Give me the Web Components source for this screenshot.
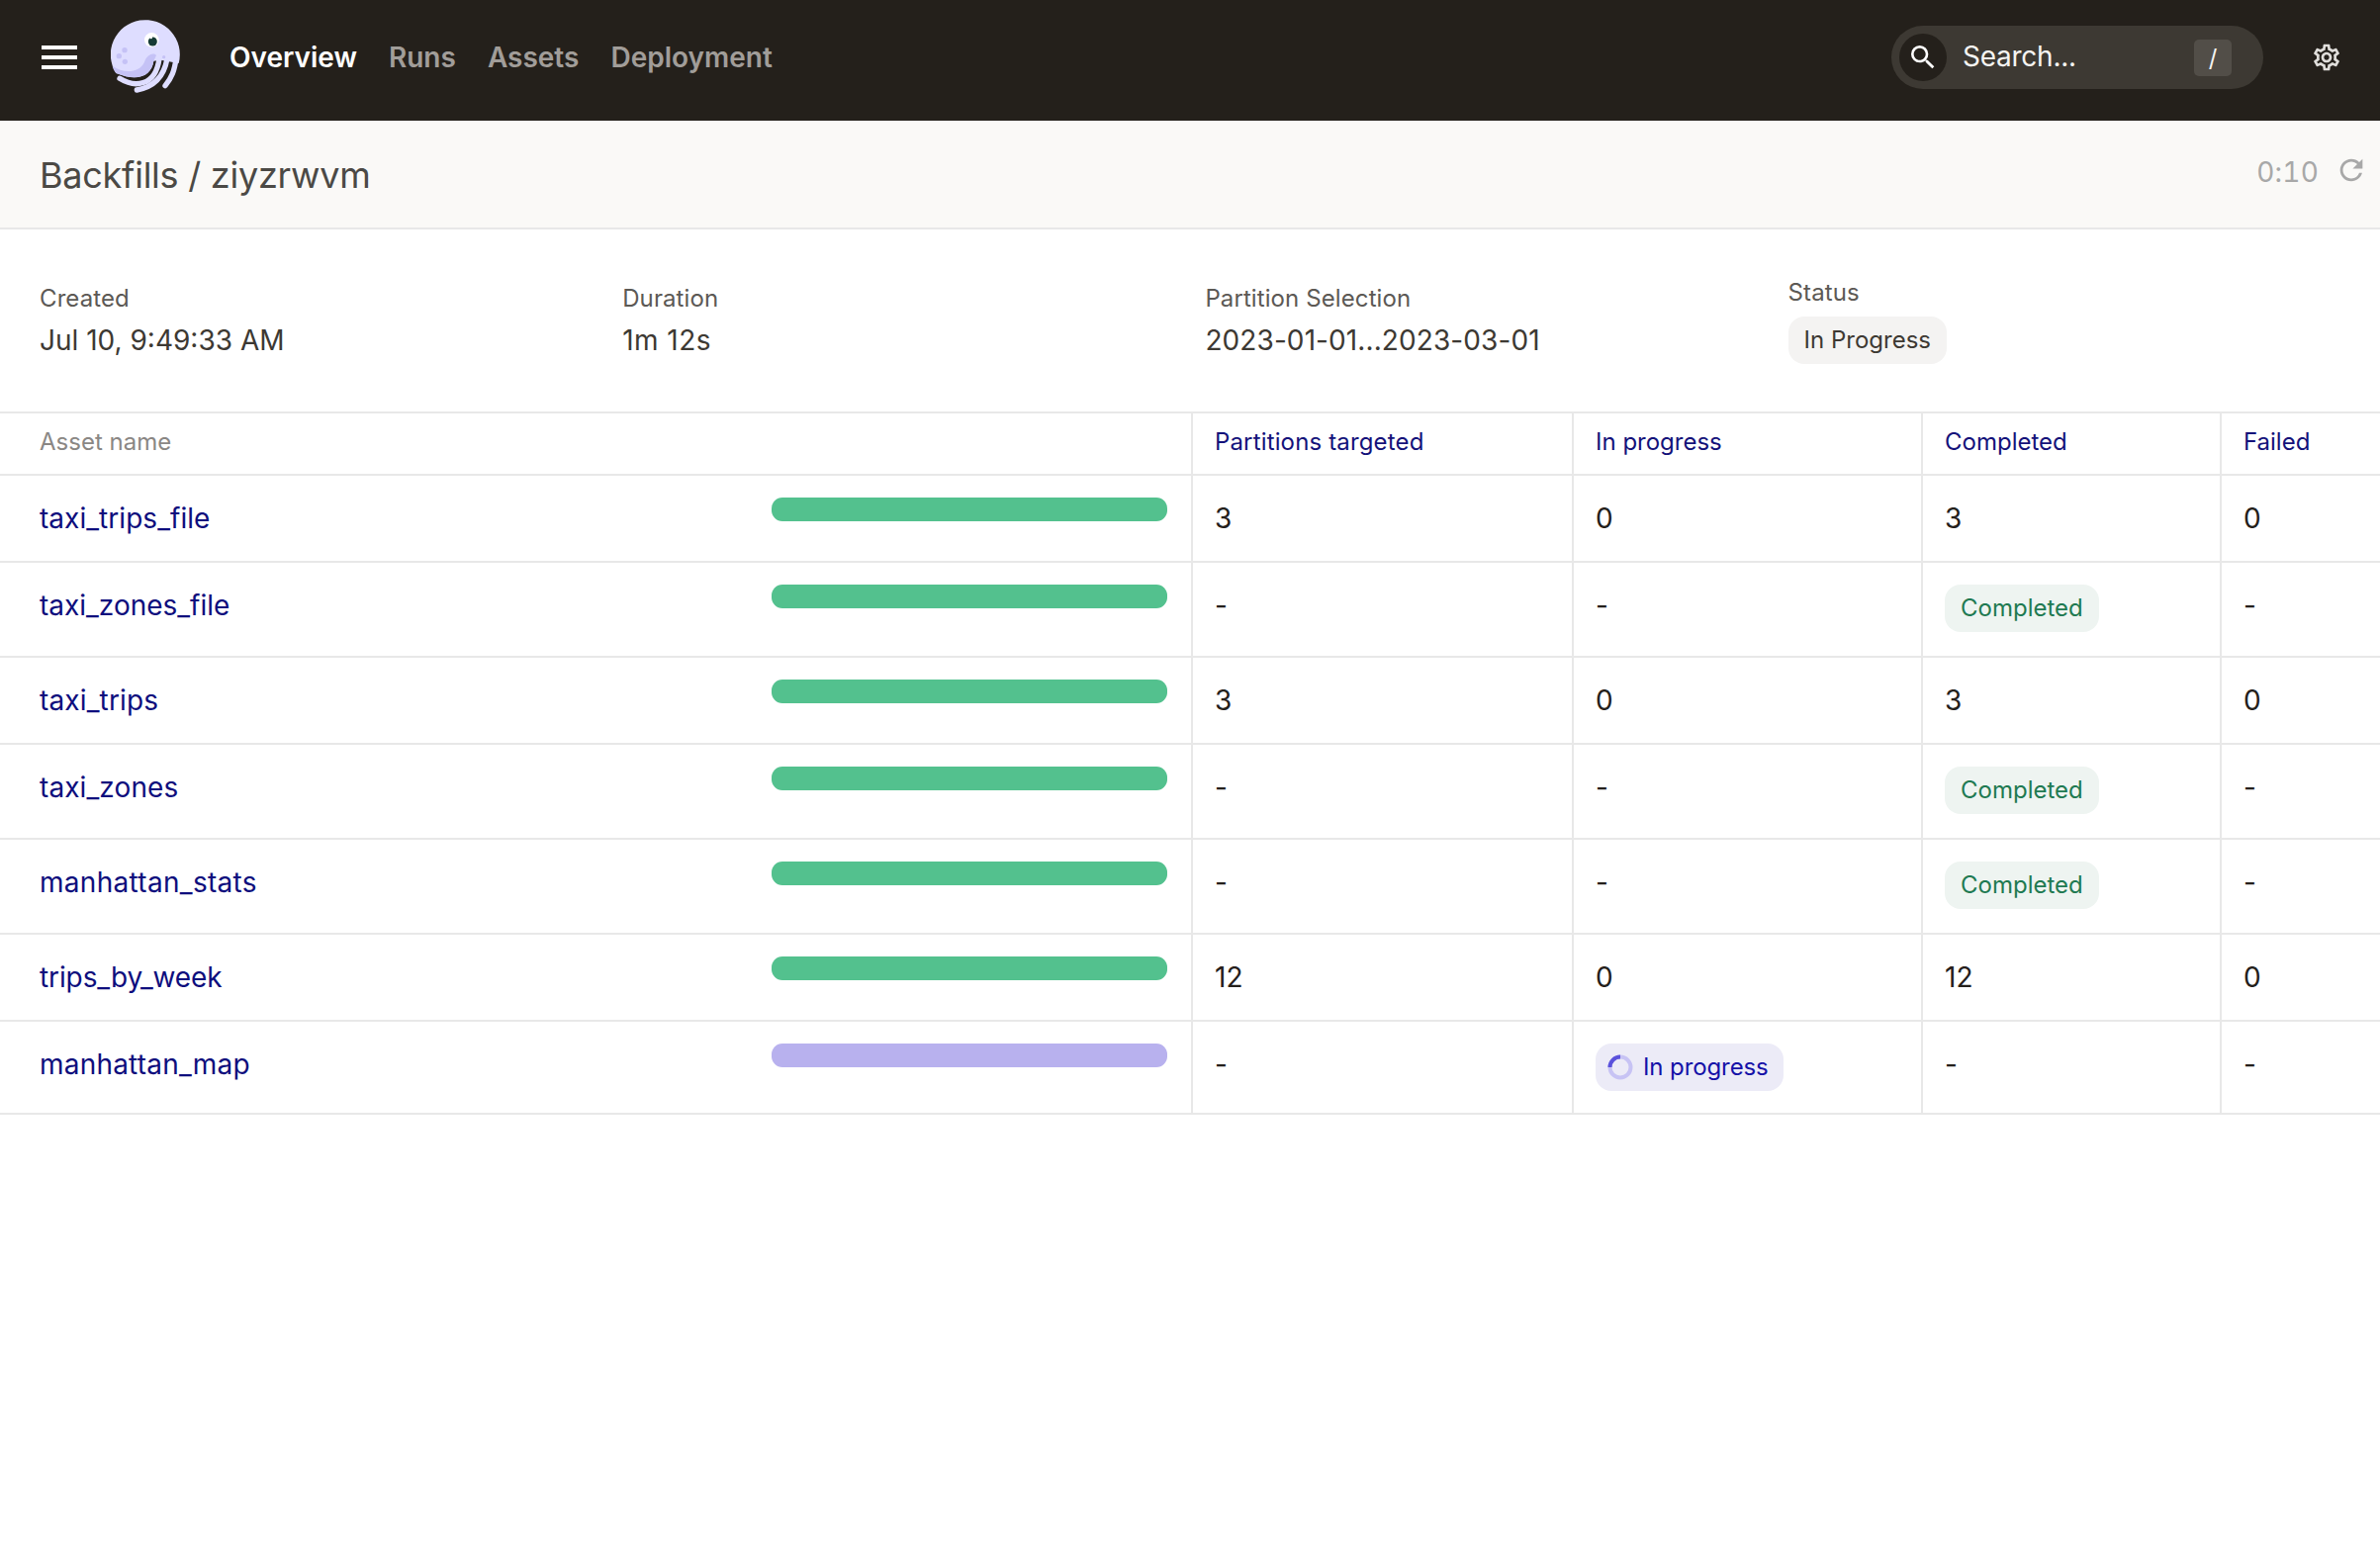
<!DOCTYPE html>
<html lang="en">
<head>
<meta charset="utf-8">
<title>Backfills / ziyzrwvm</title>
<style>
html,body{margin:0;padding:0;background:#fff;font-family:Inter,"Liberation Sans",sans-serif;}
body{width:2406px;min-height:1562px;}
</style>
</head>
<body>
<app-nav></app-nav>
<page-header heading="Backfills / ziyzrwvm" timer="0:10"></page-header>
<details-bar></details-bar>
<backfill-table>
  <backfill-row name="taxi_trips_file" track=".05" bar="done" target="3" running="0" completed="3" failed="0"></backfill-row>
  <backfill-row name="taxi_zones_file" bar="done" target="-" running="-" completed="@done" failed="-"></backfill-row>
  <backfill-row name="taxi_trips" track=".15" bar="done" target="3" running="0" completed="3" failed="0"></backfill-row>
  <backfill-row name="taxi_zones" track=".1" bar="done" target="-" running="-" completed="@done" failed="-"></backfill-row>
  <backfill-row name="manhattan_stats" track=".3" bar="done" target="-" running="-" completed="@done" failed="-"></backfill-row>
  <backfill-row name="trips_by_week" track="-.1" bar="done" target="12" running="0" completed="12" failed="0"></backfill-row>
  <backfill-row name="manhattan_map" track=".2" bar="run" target="-" running="@run" completed="-" failed="-"></backfill-row>
</backfill-table>
<script>
const make=(name,html)=>customElements.define(name,class extends HTMLElement{
  connectedCallback(){ if(this.shadowRoot) return; this.attachShadow({mode:'open'}).innerHTML=typeof html==='function'?html(this):html; }
});
make('dagster-logo',`<style>:host{display:block;width:74px;height:76px;flex:none}svg{display:block;width:100%;height:100%}</style>
<svg viewBox="0 0 222 228" aria-hidden="true">
  <path d="M16 162A105 105 0 1 1 206 132L152 122L130 125C124 168 85 190 16 162Z" fill="#DEDDFF"/>
  <path d="M16 162C10 155 7 148 5 140C40 165 88 160 102 128C110 105 130 98 138 108L130 125C124 168 85 190 16 162Z" fill="#C5C2F6"/>
  <circle cx="42" cy="92" r="8" fill="#C5C2F6"/><circle cx="25" cy="110" r="8" fill="#C5C2F6"/><circle cx="43" cy="127" r="8" fill="#C5C2F6"/>
  <g fill="none" stroke="#DEDDFF" stroke-width="16" stroke-linecap="round">
    <path d="M27 178C70 205 135 205 147 118"/>
    <path d="M79 213C125 205 160 180 171 118"/>
    <path d="M165 200C185 175 193 155 198 118"/>
  </g>
  <circle cx="161" cy="113" r="5" fill="#C5C2F6"/>
  <circle cx="124" cy="61" r="22" fill="#fff"/>
  <circle cx="127" cy="66" r="13.5" fill="#163B36"/>
  <circle cx="122" cy="54" r="4" fill="#fff"/>
</svg>`);
make('nav-link',`<style>:host{display:block;font:600 28px/40px Inter,"Liberation Sans",sans-serif;color:#A19D99;white-space:nowrap}:host([active]){color:#fff}</style><slot></slot>`);
make('search-pill',`<style>
:host{display:flex;align-items:center;width:376px;height:64px;border-radius:32px;background:#3D3933;padding:0 32px 0 8px;box-sizing:border-box;font:400 28px/36px Inter,"Liberation Sans",sans-serif;color:#F5F4F2}
.ic{width:48px;height:48px;border-radius:50%;background:#24201B;display:flex;align-items:center;justify-content:center;flex:none}
svg{width:32px;height:32px;fill:#fff;display:block}
.t{margin-left:16px;flex:1;letter-spacing:-.25px;margin-top:-3px}
.k{width:38px;height:37px;border-radius:5px;background:#524E48;display:flex;align-items:center;justify-content:center;font-size:24px;line-height:37px}
</style><span class="ic"><svg viewBox="0 0 24 24"><path d="M15.5 14h-.79l-.28-.27A6.471 6.471 0 0 0 16 9.5 6.5 6.5 0 1 0 9.5 16c1.61 0 3.09-.59 4.23-1.57l.27.28v.79l5 4.99L20.49 19l-4.99-5zm-6 0C7.01 14 5 11.99 5 9.5S7.01 5 9.5 5 14 7.01 14 9.5 11.99 14 9.5 14z"/></svg></span><span class="t">Search...</span><span class="k">/</span>`);
make('app-nav',`<style>
:host{display:flex;align-items:center;height:122px;background:#24201B;box-sizing:border-box;padding:0 38px 6px 36px}
.m{width:48px;height:48px;fill:#fff;display:block;flex:none;margin-right:28px}
.links{display:flex;gap:32px;margin-left:46px;flex:1}
.g{width:32px;height:32px;fill:#E0DEDB;display:block;margin-left:48px}
</style><svg class="m" viewBox="0 0 24 24"><path d="M3 18h18v-2H3v2zm0-5h18v-2H3v2zm0-7v2h18V6H3z"/></svg>
<dagster-logo></dagster-logo>
<div class="links"><nav-link active>Overview</nav-link><nav-link>Runs</nav-link><nav-link>Assets</nav-link><nav-link>Deployment</nav-link></div>
<search-pill></search-pill>
<svg class="g" viewBox="0 0 24 24"><path d="M19.43 12.98c.04-.32.07-.64.07-.98 0-.34-.03-.66-.07-.98l2.11-1.65c.19-.15.24-.42.12-.64l-2-3.46a.5.5 0 0 0-.61-.22l-2.49 1c-.52-.4-1.08-.73-1.69-.98l-.38-2.65A.488.488 0 0 0 14 2h-4c-.25 0-.46.18-.49.42l-.38 2.65c-.61.25-1.17.59-1.69.98l-2.49-1a.566.566 0 0 0-.18-.03c-.17 0-.34.09-.43.25l-2 3.46c-.13.22-.07.49.12.64l2.11 1.65c-.04.32-.07.65-.07.98 0 .33.03.66.07.98l-2.11 1.65c-.19.15-.24.42-.12.64l2 3.46a.5.5 0 0 0 .61.22l2.49-1c.52.4 1.08.73 1.69.98l.38 2.65c.03.24.24.42.49.42h4c.25 0 .46-.18.49-.42l.38-2.65c.61-.25 1.17-.59 1.69-.98l2.49 1c.06.02.12.03.18.03.17 0 .34-.09.43-.25l2-3.46c.12-.22.07-.49-.12-.64l-2.11-1.65zm-1.98-1.71c.04.31.05.52.05.73 0 .21-.02.43-.05.73l-.14 1.13.89.7 1.08.84-.7 1.21-1.27-.51-1.04-.42-.9.68c-.43.32-.84.56-1.25.73l-1.06.43-.16 1.13-.2 1.35h-1.4l-.19-1.35-.16-1.13-1.06-.43c-.43-.18-.83-.41-1.23-.71l-.91-.7-1.06.43-1.27.51-.7-1.21 1.08-.84.89-.7-.14-1.13c-.03-.31-.05-.54-.05-.74s.02-.43.05-.73l.14-1.13-.89-.7-1.08-.84.7-1.21 1.27.51 1.04.42.9-.68c.43-.32.84-.56 1.25-.73l1.06-.43.16-1.13.2-1.35h1.39l.19 1.35.16 1.13 1.06.43c.43.18.83.41 1.23.71l.91.7 1.06-.43 1.27-.51.7 1.21-1.07.85-.89.7.14 1.13zM12 8c-2.21 0-4 1.79-4 4s1.79 4 4 4 4-1.79 4-4-1.79-4-4-4zm0 6c-1.1 0-2-.9-2-2s.9-2 2-2 2 .9 2 2-.9 2-2 2z"/></svg>`);
make('page-header',el=>`<style>
:host{display:flex;align-items:center;height:110px;box-sizing:border-box;background:#FAF9F7;border-bottom:2px solid #E8E8E8;padding:0 12px 0 40px;font-family:Inter,"Liberation Sans",sans-serif}
h1{margin:2px 0 0;flex:1;font:400 36px/44px Inter,"Liberation Sans",sans-serif;letter-spacing:-.25px;color:#4B4945}
.r{display:flex;align-items:center;gap:16px;margin-top:-8px;color:#A8A8A8;font-size:28px;line-height:36px;font-variant-numeric:tabular-nums;letter-spacing:.2px}
.r span{position:relative;top:2px}
svg{width:34px;height:34px;fill:#A8A8A8;display:block}
</style><h1>${el.getAttribute('heading')}</h1><div class="r"><span>${el.getAttribute('timer')}</span><svg viewBox="0 0 24 24"><path d="M17.65 6.35A7.958 7.958 0 0 0 12 4c-4.42 0-7.99 3.58-7.99 8s3.57 8 7.99 8c3.73 0 6.84-2.55 7.73-6h-2.08A5.99 5.99 0 0 1 12 18c-3.31 0-6-2.69-6-6s2.69-6 6-6c1.66 0 3.14.69 4.22 1.78L13 11h7V4l-2.35 2.35z"/></svg></div>`);
make('detail-item',el=>`<style>
:host{display:flex;flex-direction:column;gap:8px;font-family:Inter,"Liberation Sans",sans-serif}
.l{font-size:24px;line-height:32px;color:#5C5955;letter-spacing:.1px}
.v{font-size:28px;line-height:36px;color:#3D3933;letter-spacing:${el.getAttribute('track')||0}px}
</style><div class="l">${el.getAttribute('label')}</div><div class="v"><slot></slot></div>`);
make('status-tag',el=>{
  const t=el.getAttribute('tone');
  return `<style>
:host{display:inline-flex;align-items:center;height:48px;box-sizing:border-box;padding:0 16px;border-radius:16px;font:400 24px/32px Inter,"Liberation Sans",sans-serif;letter-spacing:0;white-space:nowrap;vertical-align:top}
:host([tone=neutral]){background:#F4F3F2;color:#3D3933}
:host([tone=done]){background:#EEF4F1;color:#1F7A52;margin-bottom:2px}
:host([tone=run]){background:#ECEBF7;color:#1511A8;padding:0 15px 0 12px;letter-spacing:-.1px}
svg{width:26px;height:26px;margin-right:10px;display:block;flex:none}
</style>${t==='run'?`<svg viewBox="0 0 26 26"><circle cx="13" cy="13" r="10.5" fill="none" stroke="#C7C3F4" stroke-width="4"/><path d="M2.5 13A10.5 10.5 0 0 1 13 2.5" fill="none" stroke="#5B52DC" stroke-width="4"/></svg>`:''}<slot></slot>`;
});
make('details-bar',`<style>
:host{display:grid;grid-template-columns:repeat(4,589.2px);align-items:center;padding:48px 0 48px 40px;height:184px;box-sizing:border-box}
</style>
<detail-item label="Created">Jul 10, 9:49:33 AM</detail-item>
<detail-item label="Duration" track=".45">1m 12s</detail-item>
<detail-item label="Partition Selection" track=".1">2023-01-01...2023-03-01</detail-item>
<detail-item label="Status"><status-tag tone="neutral">In Progress</status-tag></detail-item>`);
const COLS='1204px 385px 353px 302px 162px';
make('backfill-table',`<style>
:host{display:block;font-family:Inter,"Liberation Sans",sans-serif;border-bottom:2px solid #E8E8E8}
.h{display:grid;grid-template-columns:${COLS};border-top:2px solid #E8E8E8;height:63px;box-sizing:border-box;font-size:24px;line-height:32px;color:#14127A}
.h>div{padding:13px 0 0 22px;border-left:2px solid #E8E8E8;box-sizing:border-box}
.h>div:first-child{border:0;padding-left:40px;color:#8A8784}
.p{letter-spacing:.15px}
</style><div class="h"><div>Asset name</div><div class="p">Partitions targeted</div><div>In progress</div><div>Completed</div><div>Failed</div></div><slot></slot>`);
const cell=v=>v==='@done'?'<status-tag tone="done">Completed</status-tag>':v==='@run'?'<status-tag tone="run">In progress</status-tag>':v;
make('backfill-row',el=>{
  const a=n=>el.getAttribute(n);
  return `<style>
:host{display:grid;grid-template-columns:${COLS};border-top:2px solid #E8E8E8;font-family:Inter,"Liberation Sans",sans-serif;font-size:28px;line-height:42px;color:#24201B}
.c{padding:22px 0 22px 22px;border-left:2px solid #E8E8E8;box-sizing:border-box}
.n{display:flex;justify-content:space-between;border:0;padding:22px 24px 22px 40px;color:#0E0E7D;letter-spacing:${a('track')||0}px}
.b{width:400px;height:24px;border-radius:11px;background:#53C18E}
.b.run{background:#B8B1EE}
</style><div class="c n"><span>${a('name')}</span><div class="b ${a('bar')==='run'?'run':''}"></div></div><div class="c">${cell(a('target'))}</div><div class="c">${cell(a('running'))}</div><div class="c">${cell(a('completed'))}</div><div class="c">${cell(a('failed'))}</div>`;
});
</script>
</body>
</html>
